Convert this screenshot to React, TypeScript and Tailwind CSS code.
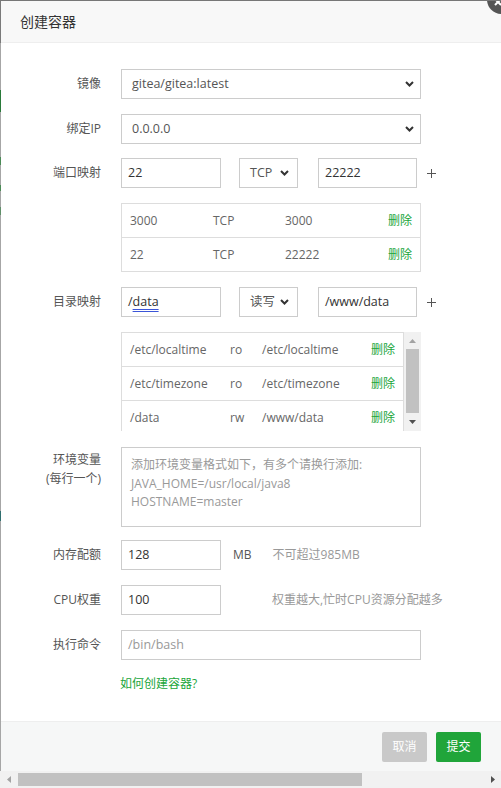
import React from "react";

const FONT = { fontFamily: '"Open Sans", "Noto Sans CJK SC", sans-serif' };

function Chevron() {
  return (
    <svg width="9" height="6" viewBox="0 0 9 6" className="shrink-0">
      <path d="M1 1 L4.5 4.5 L8 1" fill="none" stroke="#333" strokeWidth="2" />
    </svg>
  );
}

function Select({ value, className }: { value: string; className: string }) {
  return (
    <div
      className={`h-[30px] border border-[#ccc] bg-white flex items-center justify-between pl-[10px] pr-[6px] text-[12.5px] text-[#555] ${className}`}
    >
      <span>{value}</span>
      <Chevron />
    </div>
  );
}

function Input({ children, className, muted }: { children: React.ReactNode; className: string; muted?: boolean }) {
  return (
    <div
      className={`h-[30px] border border-[#ccc] bg-white flex items-center pl-[6px] text-[12.5px] ${muted ? "text-[#999]" : "text-[#333]"} ${className}`}
    >
      {children}
    </div>
  );
}

function Label({ children }: { children: React.ReactNode }) {
  return <div className="w-[100px] shrink-0 text-right text-[12px] text-[#555]">{children}</div>;
}

function Row({ label, children, className = "" }: { label: React.ReactNode; children: React.ReactNode; className?: string }) {
  return (
    <div className={`flex items-center h-[30px] shrink-0 ${className}`}>
      <Label>{label}</Label>
      <div className="ml-[20px] flex items-center">{children}</div>
    </div>
  );
}

function Arrow({ dir, color }: { dir: "up" | "down" | "left" | "right"; color: string }) {
  const d =
    dir === "up"
      ? "M0 4 L3.5 0 L7 4 Z"
      : dir === "down"
      ? "M0 0 L7 0 L3.5 4 Z"
      : dir === "left"
      ? "M4 0 L4 7 L0 3.5 Z"
      : "M0 0 L4 3.5 L0 7 Z";
  const w = dir === "up" || dir === "down" ? 7 : 4;
  const h = dir === "up" || dir === "down" ? 4 : 7;
  return (
    <svg width={w} height={h} viewBox={`0 0 ${w} ${h}`}>
      <path d={d} fill={color} />
    </svg>
  );
}

function Plus() {
  return (
    <svg width="9" height="9" viewBox="0 0 9 9" className="ml-[10px]">
      <path d="M0 4.5 H9 M4.5 0 V9" stroke="#555" strokeWidth="1" />
    </svg>
  );
}

export default function App() {
  const portRows = [
    ["3000", "TCP", "3000"],
    ["22", "TCP", "22222"],
  ];
  const dirRows = [
    ["/etc/localtime", "ro", "/etc/localtime"],
    ["/etc/timezone", "ro", "/etc/timezone"],
    ["/data", "rw", "/www/data"],
  ];
  return (
    <div className="relative w-[501px] h-[788px] overflow-hidden bg-white flex border-t border-[#777]" style={FONT}>
      {/* background strip */}
      <div className="w-[1px] shrink-0 flex flex-col bg-[#a6a6a6]">
        <div className="h-[42px] bg-[#7a7a7a]" />
        <div className="h-[47px]" />
        <div className="h-[22px] bg-[#2a7a3a]" />
        <div className="h-[45px]" />
        <div className="h-[8px] bg-[#4a8a55]" />
        <div className="h-[20px]" />
        <div className="h-[6px] bg-[#4a8a55]" />
        <div className="h-[16px]" />
        <div className="h-[8px] bg-[#5f8f68]" />
        <div className="h-[296px]" />
        <div className="h-[10px] bg-[#2f6f6f]" />
        <div className="flex-1" />
      </div>
      <div className="flex-1 flex flex-col min-w-0">
        {/* title */}
        <div className="h-[42px] shrink-0 bg-[#f8f8f8] border-b border-[#eee] flex items-center pl-[19px] text-[14px] text-[#333]">
          创建容器
        </div>
        {/* body */}
        <div className="flex-1 flex flex-col pt-[26px]">
          <Row label="镜像">
            <Select value="gitea/gitea:latest" className="w-[300px]" />
          </Row>
          <Row label="绑定IP" className="mt-[15px]">
            <Select value="0.0.0.0" className="w-[300px]" />
          </Row>
          <Row label="端口映射" className="mt-[14px]">
            <Input className="w-[100px]">22</Input>
            <Select value="TCP" className="w-[59px] ml-[18px] !pr-[8px]" />
            <Input className="w-[99px] ml-[20px]">22222</Input>
            <Plus />
          </Row>
          {/* port table */}
          <div className="mt-[15px] ml-[120px] w-[300px] shrink-0 border border-[#ddd] text-[12px] text-[#666]">
            {portRows.map((r, i) => (
              <div key={i} className={`flex items-center ${i > 0 ? "h-[34px] border-t border-[#ddd]" : "h-[33px]"}`}>
                <div className="w-[82px] pl-[8px]">{r[0]}</div>
                <div className="w-[72px] pl-[9px]">{r[1]}</div>
                <div className="flex-1 pl-[9px]">{r[2]}</div>
                <div className="pr-[8px] text-[#20a53a]">删除</div>
              </div>
            ))}
          </div>
          <Row label="目录映射" className="mt-[15px]">
            <Input className="w-[100px]">
              <span>
                /<span className="underline decoration-double decoration-[#3b55d8] underline-offset-[3px]">data</span>
              </span>
            </Input>
            <Select value="读写" className="w-[59px] ml-[18px] !pr-[8px]" />
            <Input className="w-[99px] ml-[20px]">/www/data</Input>
            <Plus />
          </Row>
          {/* dir table with scrollbar */}
          <div className="mt-[15px] ml-[120px] w-[300px] h-[99px] shrink-0 flex overflow-hidden">
            <div className="flex-1 text-[12px] text-[#666]">
              <div className="border border-[#ddd]">
                {dirRows.map((r, i) => (
                  <div key={i} className={`flex items-center ${i > 0 ? "h-[34px] border-t border-[#ddd]" : "h-[33px]"}`}>
                    <div className="w-[100px] pl-[8px]">{r[0]}</div>
                    <div className="w-[31px] pl-[8px]">{r[1]}</div>
                    <div className="flex-1 pl-[9px]">{r[2]}</div>
                    <div className="pr-[8px] text-[#20a53a]">删除</div>
                  </div>
                ))}
              </div>
            </div>
            <div className="w-[17px] shrink-0 bg-[#f1f1f1] flex flex-col items-center">
              <div className="h-[17px] flex items-center justify-center">
                <Arrow dir="up" color="#a3a3a3" />
              </div>
              <div className="w-[13px] h-[64px] bg-[#c1c1c1]" />
              <div className="flex-1 flex items-center justify-center">
                <Arrow dir="down" color="#505050" />
              </div>
            </div>
          </div>
          {/* env */}
          <div className="mt-[16px] flex shrink-0">
            <div className="w-[100px] shrink-0 text-right text-[12px] text-[#555] pt-[3px] leading-[19px]">
              环境变量
              <br />
              (每行一个)
            </div>
            <div className="ml-[20px] w-[300px] h-[80px] border border-[#ccc] pl-[9px] pt-[8px] text-[12px] leading-[18.5px] text-[#999]">
              添加环境变量格式如下，有多个请换行添加:
              <br />
              JAVA_HOME=/usr/local/java8
              <br />
              HOSTNAME=master
            </div>
          </div>
          <Row label="内存配额" className="mt-[13px]">
            <Input className="w-[100px]">128</Input>
            <span className="ml-[12px] text-[12px] text-[#555]">MB</span>
            <span className="ml-[21px] text-[12px] text-[#999]">不可超过985MB</span>
          </Row>
          <Row label="CPU权重" className="mt-[15px]">
            <Input className="w-[100px]">100</Input>
            <span className="ml-[51px] text-[12px] text-[#999]">权重越大,忙时CPU资源分配越多</span>
          </Row>
          <Row label="执行命令" className="mt-[15px]">
            <Input className="w-[300px]" muted>
              /bin/bash
            </Input>
          </Row>
          <div className="mt-[16px] ml-[119px] text-[12px] text-[#20a53a] leading-[16px]">如何创建容器?</div>
        </div>
        {/* footer */}
        <div className="h-[50px] shrink-0 border-t border-[#eee] bg-[#f6f7f7] flex items-center justify-end pr-[20px] gap-[9px]">
          <div className="w-[45px] h-[30px] rounded-[2px] bg-[#c9c9c9] text-white text-[12px] flex items-center justify-center">
            取消
          </div>
          <div className="w-[45px] h-[30px] rounded-[2px] bg-[#20a53a] text-white text-[12px] flex items-center justify-center">
            提交
          </div>
        </div>
        <div className="h-[17px] shrink-0" />
      </div>
      {/* horizontal scrollbar */}
      <div className="absolute left-0 bottom-0 w-[501px] h-[17px] bg-[#f1f1f1] flex items-center">
        <div className="w-[17px] flex justify-center">
          <Arrow dir="left" color="#a3a3a3" />
        </div>
        <div className="ml-[1px] w-[344px] h-[13px] bg-[#c1c1c1]" />
        <div className="flex-1" />
        <div className="w-[17px] flex justify-center">
          <Arrow dir="right" color="#505050" />
        </div>
      </div>
      {/* close button */}
      <div className="absolute left-[487px] top-[-16px] w-[29px] h-[29px] rounded-full bg-[#555]">
        <svg width="29" height="29" viewBox="0 0 29 29" className="absolute left-0 top-0">
          <path d="M6 18 L12 24 M12 18 L6 24" stroke="#fff" strokeWidth="2" transform="translate(2 -4)" />
        </svg>
      </div>
    </div>
  );
}
